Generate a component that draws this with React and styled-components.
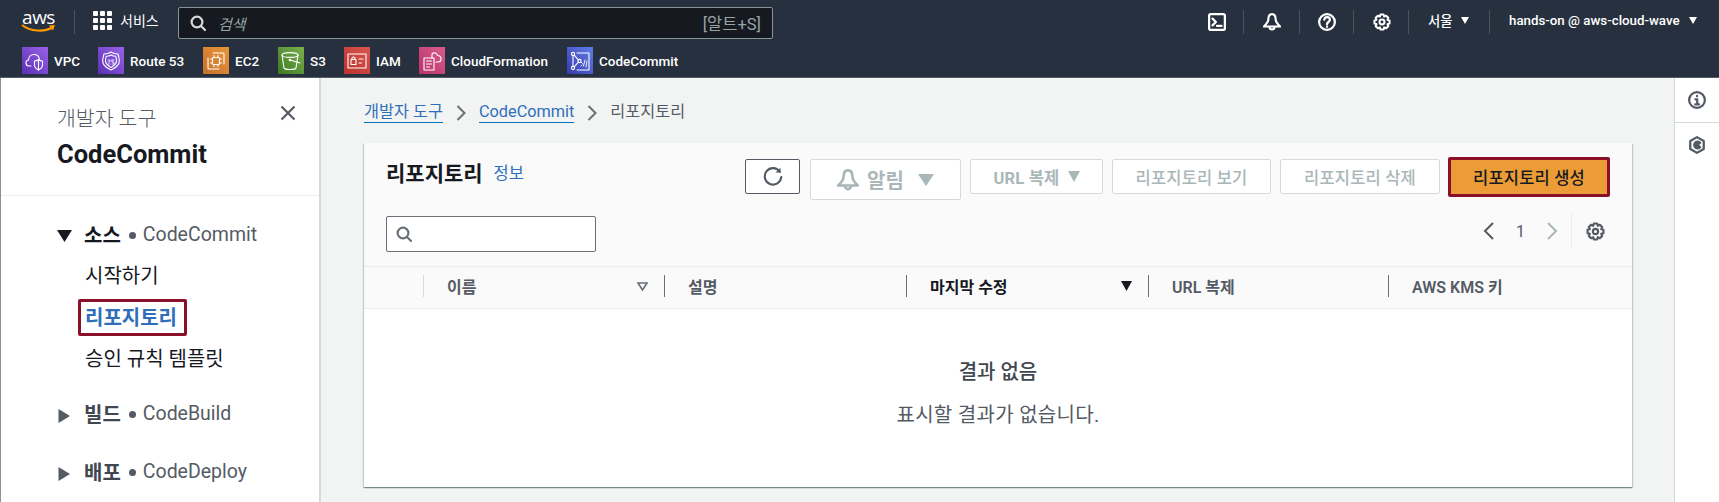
import React from 'react';
import styled, {createGlobalStyle} from 'styled-components';

const Global = createGlobalStyle`
    html, body {
        margin: 0;
        padding: 0;
        background: #f2f3f3;
        overflow: hidden;
    }
    * { box-sizing: border-box; }
    body {
        font-family: Roboto, "Noto Sans CJK KR", sans-serif;
        color: #16191f;
    }
`

const Page = styled.div`
    width: 1719px;
    height: 502px;
    display: flex;
    flex-direction: column;
    overflow: hidden;
`
const TopBar = styled.header`
    height: 78px;
    flex: none;
    background: #27303e;
    border-bottom: 1px solid #545b64;
    display: flex;
    flex-direction: column;
`
const TopRow = styled.div`
    height: 47px;
    display: flex;
    align-items: flex-start;
    padding: 7px 0 0 21px;
`
const Logo = styled.div`
    width: 35px;
    height: 24px;
    margin-top: 3px;
    display: flex;
    flex-direction: column;
    align-items: center;
    color: #fff;
    font-size: 19px;
    line-height: 15px;
    font-family: "Open Sans", sans-serif;
    letter-spacing: -0.5px;
`
const Smile = styled.svg`
    display: block;
    margin-top: -1px;
`
const TopDivider = styled.span`
    flex: none;
    width: 1px;
    height: 24px;
    margin: ${p => p.$m || '3px 0 0 0'};
    background: #4a535f;
`
const ServicesBtn = styled.div`
    display: flex;
    align-items: center;
    gap: 8px;
    height: 26px;
    margin: 0 0 0 18px;
    color: #fff;
    font-size: 14px;
    width: 85px;
`
const GridIcon = styled.div`
    display: grid;
    grid-template-columns: repeat(3, 5px);
    grid-auto-rows: 5px;
    gap: 2px;
    & > i {
        background: #fff;
        border-radius: 1px;
    }
`
const SearchBox = styled.div`
    width: 595px;
    height: 32px;
    background: #16191f;
    border: 1px solid #879596;
    border-radius: 2px;
    display: flex;
    align-items: center;
    padding: 0 11px 0 11px;
    color: #95a5a6;
`
const SearchGlass = styled.span`
    display: flex;
    color: #d5dbdb;
`
const SearchHint = styled.span`
    margin-left: 12px;
    font-style: italic;
    font-size: 15px;
    flex: 1;
`
const SearchKey = styled.span`
    font-size: 16.5px;
`
const RightTools = styled.div`
    display: flex;
    align-items: flex-start;
    margin-left: auto;
    color: #fff;
`
const ToolIcon = styled.span`
    flex: none;
    width: 18px;
    height: 18px;
    margin: ${p => p.$m};
    display: flex;
`
const MenuText = styled.span`
    display: flex;
    align-items: center;
    height: 26px;
    font-size: 13.3px;
    font-weight: 500;
    margin: ${p => p.$m};
    width: ${p => p.$w}px;
    white-space: nowrap;
    justify-content: space-between;
`
const Caret = styled.span`
    width: 0;
    height: 0;
    border-left: 4px solid transparent;
    border-right: 4px solid transparent;
    border-top: 7px solid #fff;
`
const Bookmarks = styled.nav`
    display: flex;
    align-items: center;
    padding-left: 22px;
    height: 27px;
`
const Bookmark = styled.span`
    display: flex;
    align-items: center;
    gap: 6px;
    color: #fff;
    font-size: 13.5px;
    font-weight: 500;
    width: ${p => p.$w}px;
    white-space: nowrap;
`
const Tile = styled.span`
    flex: none;
    width: 26px;
    height: 27px;
    display: flex;
    align-items: center;
    justify-content: center;
    background: linear-gradient(45deg, ${p => p.$from}, ${p => p.$to});
`
const Body = styled.div`
    flex: 1;
    display: flex;
    min-height: 0;
`
const Sidebar = styled.aside`
    width: 321px;
    flex: none;
    background: #fff;
    border-left: 1px solid #879596;
    border-right: 2px solid #d5dbdb;
`
const SideHead = styled.div`
    position: relative;
    padding: 29px 0 26px 56px;
    border-bottom: 1px solid #eaeded;
`
const SideCrumb = styled.div`
    font-size: 20.5px;
    line-height: 24px;
    color: #545b64;
    font-weight: 300;
`
const SideTitle = styled.div`
    margin-top: 8px;
    font-size: 25.5px;
    line-height: 30px;
    font-weight: 700;
`
const CloseBtn = styled.svg`
    position: absolute;
    right: 23px;
    top: 27px;
`
const SideNav = styled.div`
    padding: 26px 0 0 56px;
`
const SideGroup = styled.div`
    display: flex;
    align-items: center;
    height: 24px;
    margin-top: ${p => p.$mt || 0}px;
`
const Triangle = styled.span`
    flex: none;
    width: 27px;
    display: flex;
    align-items: center;
    padding-top: ${p => p.$pt || 0}px;
`
const GroupName = styled.strong`
    font-size: 20px;
    font-weight: 700;
    color: ${p => (p.$open ? '#16191f' : '#414750')};
`
const Dot = styled.span`
    width: 7px;
    height: 7px;
    border-radius: 50%;
    background: #545b64;
    margin: 3px 7px 0 8px;
`
const GroupService = styled.span`
    font-size: 19.5px;
    color: #545b64;
`
const SideItem = styled.div`
    font-size: 20px;
    line-height: 24px;
    margin: ${p => p.$mt || 0}px 0 0 28px;
    color: #16191f;
`
const ActiveItem = styled.div`
    width: 109px;
    height: 37px;
    margin: 11px 0 11px 21px;
    border: 3px solid #8a0f2a;
    border-radius: 2px;
    color: #2f6fba;
    font-size: 20px;
    font-weight: 700;
    line-height: 32px;
    padding-left: 4px;
    white-space: nowrap;
`
const Main = styled.main`
    flex: 1;
    padding: 0 42px 0 43px;
    min-width: 0;
`
const Crumbs = styled.div`
    height: 65px;
    display: flex;
    align-items: flex-start;
    padding-top: 23px;
    font-size: 16.3px;
    line-height: 22px;
    color: #545b64;
`
const CrumbLink = styled.span`
    color: #2f6fba;
    border-bottom: 1px solid #0073bb;
    height: 22px;
`
const CrumbSep = styled.svg`
    margin: 4px 13px 0 13px;
`
const Card = styled.section`
    height: 344px;
    background: #fff;
    box-shadow: 0 1px 1px 0 rgba(0, 28, 36, 0.3), 1px 1px 1px 0 rgba(0, 28, 36, 0.15), -1px 1px 1px 0 rgba(0, 28, 36, 0.15);
    display: flex;
    flex-direction: column;
`
const CardHead = styled.div`
    background: #fafafa;
    padding: 16px 22px 14px 22px;
`
const HeadRow = styled.div`
    display: flex;
    align-items: flex-start;
    height: ${p => p.$h}px;
    margin-bottom: ${p => p.$mb || 0}px;
`
const CardTitle = styled.h1`
    margin: 1px 0 0;
    font-size: 21px;
    line-height: 28px;
    font-weight: 700;
`
const InfoLink = styled.a`
    margin: 1px 0 0 11px;
    color: #2f6fba;
    font-size: 16.5px;
    line-height: 28px;
`
const Toolbar = styled.div`
    margin-left: auto;
    display: flex;
    align-items: flex-start;
    gap: 9px;
`
const Button = styled.button`
    width: ${p => p.$w}px;
    height: ${p => p.$h || 35}px;
    background: #fff;
    border: 1px solid #d5dbdb;
    border-radius: 2px;
    color: #aab7b8;
    font-family: inherit;
    font-size: ${p => p.$size || 16.5}px;
    font-weight: ${p => p.$weight || 500};
    display: flex;
    align-items: center;
    justify-content: center;
    gap: ${p => p.$gap || 0}px;
    padding: 0;
    white-space: nowrap;
    letter-spacing: 0.2px;
`
const RefreshButton = styled(Button)`
    border-color: #545b64;
    color: #545b64;
    margin-right: 1px;
`
const CreateButton = styled(Button)`
    height: 40px;
    margin: -2px 0 0 -1px;
    border: 3px solid #8a0f2a;
    background: #ec9c37;
    color: #16191f;
`
const TableSearch = styled.div`
    width: 210px;
    height: 36px;
    background: #fff;
    border: 1px solid #687078;
    border-radius: 2px;
    display: flex;
    align-items: center;
    padding-left: 9px;
    color: #687078;
`
const Pager = styled.div`
    margin-left: auto;
    display: flex;
    align-items: center;
    height: 36px;
    margin-top: -3px;
    padding-right: 5px;
    color: #545b64;
`
const PagerNum = styled.span`
    margin: 0 21px;
    font-size: 16px;
`
const PagerDivider = styled.span`
    width: 1px;
    height: 36px;
    background: #eaeded;
    margin: 0 14px 0 13px;
`
const TableHead = styled.div`
    background: #fafafa;
    height: 43px;
    flex: none;
    display: grid;
    grid-template-columns: 59px 241px 242px 242px 240px 1fr;
    border-top: 1px solid #eaeded;
    border-bottom: 1px solid #eaeded;
    align-items: center;
    padding-bottom: 3px;
`
const HeadCell = styled.div`
    height: 22px;
    display: flex;
    align-items: center;
    justify-content: space-between;
    padding: 0 16px 0 23px;
    font-size: 16px;
    font-weight: ${p => (p.$active ? 700 : 600)};
    color: ${p => (p.$active ? '#16191f' : '#545b64')};
    border-left: 1px solid ${p => (p.$soft ? '#d5dbdb' : '#687078')};
`
const Empty = styled.div`
    flex: 1;
    display: flex;
    flex-direction: column;
    align-items: center;
    padding-top: 50px;
`
const EmptyTitle = styled.div`
    font-size: 20px;
    line-height: 26px;
    font-weight: 500;
    color: #414750;
`
const EmptyText = styled.div`
    margin-top: 17px;
    font-size: 20px;
    line-height: 26px;
    color: #545b64;
    letter-spacing: 0.3px;
`
const Rail = styled.aside`
    width: 45px;
    flex: none;
    background: #fff;
    border-left: 1px solid #d5dbdb;
    color: #545b64;
`
const RailBtn = styled.div`
    height: ${p => p.$h}px;
    display: flex;
    justify-content: center;
    padding-top: ${p => p.$pt}px;
    border-bottom: ${p => (p.$line ? '1px solid #d5dbdb' : 'none')};
`
const AfterAlert = styled.svg`
    margin-left: 6px;
`

const Line = ({children, size = 18, width = 2, viewBox = '0 0 16 16'}) => (
    <svg width={size} height={size} viewBox={viewBox} fill="none" stroke="currentColor" strokeWidth={width} strokeLinecap="round" strokeLinejoin="round">
        {children}
    </svg>
)
const BellIcon = ({size, width = 1.9}) => (
    <Line size={size} width={width}>
        <path d="M8 1 C5.8 1 4.8 3 4.8 5.4 C4.8 8 3 10 0.8 12 H15.2 C13 10 11.2 8 11.2 5.4 C11.2 3 10.2 1 8 1Z" />
        <path d="M5.8 12.4 A2.2 2.2 0 0 0 10.2 12.4" />
    </Line>
)
const GearIcon = ({size = 18}) => (
    <Line size={size} width={1.8}>
        <circle cx="8" cy="8" r="2.2" />
        <path d="M6.6 1.3 H9.4 L9.9 3.2 L11.7 2.4 L13.6 4.3 L12.8 6.1 L14.7 6.6 V9.4 L12.8 9.9 L13.6 11.7 L11.7 13.6 L9.9 12.8 L9.4 14.7 H6.6 L6.1 12.8 L4.3 13.6 L2.4 11.7 L3.2 9.9 L1.3 9.4 V6.6 L3.2 6.1 L2.4 4.3 L4.3 2.4 L6.1 3.2 Z" />
    </Line>
)
const MagnifierIcon = ({size = 16, width = 2.2}) => (
    <Line size={size} width={width}>
        <circle cx="7" cy="7" r="5.4" />
        <path d="M11 11 L15 15" />
    </Line>
)
const Chevron = ({dir = 'right', color = '#545b64'}) => (
    <svg width="12" height="20" viewBox="0 0 12 20" fill="none" stroke={color} strokeWidth="2">
        <path d={dir === 'right' ? 'M2 2 L10 10 L2 18' : 'M10 2 L2 10 L10 18'} />
    </svg>
)
const Arrow = ({open, color}) => (
    <svg width="15" height="14" viewBox="0 0 15 14" fill={color}>
        <path d={open ? 'M0 1 H15 L7.5 13 Z' : 'M1.5 0 L13 7 L1.5 14 Z'} />
    </svg>
)
const CrumbChevron = () => (
    <CrumbSep width="10" height="16" viewBox="0 0 10 16" fill="none" stroke="#687078" strokeWidth="2">
        <path d="M1.5 1 L8.5 8 L1.5 15" />
    </CrumbSep>
)

const tileIcon = {fill: 'none', stroke: '#fff', strokeWidth: 1.1, strokeLinejoin: 'round', strokeLinecap: 'round'}
const TileIcon = ({children}) => (
    <svg width="22" height="22" viewBox="0 0 22 22" {...tileIcon}>{children}</svg>
)

const services = [
    {name: 'VPC', w: 76, from: '#5a2fb5', to: '#9a63e8', icon: (
        <>
            <path d="M7 16 H5 C3 16 2 14.6 2 13 C2 11.4 3 10 4.6 10 C4.6 7 6.6 4.5 10 4.5 C13 4.5 15 6.5 15.4 9" />
            <path d="M10.5 11 C12 11 13.5 10.5 14.5 9.5 C15.5 10.5 17 11 18.5 11 V15 C18.5 17.5 16.5 19 14.5 20 C12.5 19 10.5 17.5 10.5 15 Z" />
            <path d="M14.5 10 V20" />
        </>
    )},
    {name: 'Route 53', w: 105, from: '#5a2fb5', to: '#9a63e8', icon: (
        <>
            <path d="M11 2 C13 3.5 15.5 4 18 4 C19 8 20 10 19 13 C18 16.5 14 18.5 11 20 C8 18.5 4 16.5 3 13 C2 10 3 8 4 4 C6.5 4 9 3.5 11 2Z" />
            <path d="M11 5 C12.5 6 14 6.3 15.8 6.3 C16.5 9 17 10.5 16.3 12.5 C15.5 15 13 16.3 11 17.5 C9 16.3 6.5 15 5.7 12.5 C5 10.5 5.5 9 6.2 6.3 C8 6.3 9.5 6 11 5Z" />
            <path d="M8 10 H10 V12 H8 M10 14 H8 M12 10 H14 M12 10 V12 H14 V14 H12" strokeWidth=".8" />
        </>
    )},
    {name: 'EC2', w: 75, from: '#c8712b', to: '#e8963b', icon: (
        <>
            <rect x="7.5" y="7.5" width="7" height="7" rx="1" />
            <path d="M9 5.5 V7.5 M13 5.5 V7.5 M9 14.5 V16.5 M13 14.5 V16.5 M5.5 9 H7.5 M5.5 13 H7.5 M14.5 9 H16.5 M14.5 13 H16.5" />
            <path d="M8 3 H18 C18.6 3 19 3.4 19 4 V14" />
            <path d="M3 8 V18 C3 18.6 3.4 19 4 19 H14" />
        </>
    )},
    {name: 'S3', w: 66, from: '#3c7a22', to: '#7cb04e', icon: (
        <>
            <ellipse cx="10" cy="5" rx="8" ry="2.4" />
            <path d="M2 5 L4 18 C4.5 20 15.5 20 16 18 L18 5" />
            <path d="M10 10 L20 13" />
            <circle cx="10" cy="10" r=".8" />
        </>
    )},
    {name: 'IAM', w: 75, from: '#b8322e', to: '#dc5650', icon: (
        <>
            <rect x="2" y="4" width="18" height="14" />
            <rect x="5" y="9.5" width="5" height="5" />
            <path d="M6 9.5 V8 C6 6.6 9 6.6 9 8 V9.5" />
            <path d="M13 9 H17 M13 13 H15.5" />
        </>
    )},
    {name: 'CloudFormation', w: 148, from: '#b8336a', to: '#d95c8c', icon: (
        <>
            <path d="M11 8 V4 C13 2 16 3 16.5 5.5 C18.5 5.5 20 7 20 9 C20 11 18.5 12 17 12 H15" />
            <rect x="3" y="8" width="10" height="12" />
            <path d="M5.5 11 H10.5 M5.5 14 H10.5 M5.5 17 H8.5" />
        </>
    )},
    {name: 'CodeCommit', w: 110, from: '#3a3aad', to: '#5f7fe8', icon: (
        <>
            <circle cx="4" cy="4" r="1.6" />
            <circle cx="4" cy="18" r="1.6" />
            <circle cx="10.5" cy="11" r="1.6" />
            <path d="M4 5.6 V16.4 M5.2 5.2 L9.4 9.9 M5.2 16.8 L9.4 12.1 M8 3 H20 V20 H8" />
            <path d="M13.5 13.5 L12 12 M13 15 L12 16 M16 10 L14.5 16 M18 11 L17 17" strokeWidth=".9" />
        </>
    )},
]

const columns = [
    {name: '이름', sort: 'outline', soft: true},
    {name: '설명'},
    {name: '마지막 수정', active: true, sort: 'solid'},
    {name: 'URL 복제'},
    {name: 'AWS KMS 키'},
]

function Header() {
    return (
        <TopBar>
            <TopRow>
                <Logo>
                    aws
                    <Smile width="35" height="9" viewBox="0 0 35 9" fill="none">
                        <path d="M1 1 C9 7.5 24 8.5 32 3" stroke="#f90" strokeWidth="2.2" />
                        <path d="M28 1.5 L34 1 L32 6.5" fill="#f90" />
                    </Smile>
                </Logo>
                <TopDivider $m="3px 0 0 18px" />
                <ServicesBtn>
                    <GridIcon>{Array.from({length: 9}).map((_, i) => <i key={i} />)}</GridIcon>
                    서비스
                </ServicesBtn>
                <SearchBox>
                    <SearchGlass><MagnifierIcon /></SearchGlass>
                    <SearchHint>검색</SearchHint>
                    <SearchKey>[알트+S]</SearchKey>
                </SearchBox>
                <RightTools>
                    <ToolIcon $m="6px 17px 0 0">
                        <Line>
                            <rect x="1" y="1" width="14" height="14" rx="1.5" />
                            <path d="M4 5 L7 8 L4 11 M8 11.5 H12" />
                        </Line>
                    </ToolIcon>
                    <TopDivider />
                    <ToolIcon $m="6px 18px 0 19px"><BellIcon /></ToolIcon>
                    <TopDivider />
                    <ToolIcon $m="6px 17px 0 18px">
                        <Line>
                            <circle cx="8" cy="8" r="7" />
                            <path d="M5.6 6 C5.8 2.8 10.6 3 10.6 6 C10.6 8 8 8 8 10" />
                            <path d="M8 12.2 V12.3" />
                        </Line>
                    </ToolIcon>
                    <TopDivider />
                    <ToolIcon $m="6px 17px 0 19px"><GearIcon /></ToolIcon>
                    <TopDivider />
                    <MenuText $m="0 20px 0 19px" $w={41}>서울 <Caret /></MenuText>
                    <TopDivider />
                    <MenuText $m="0 22px 0 19px" $w={188}>hands-on @ aws-cloud-wave <Caret /></MenuText>
                </RightTools>
            </TopRow>
            <Bookmarks>
                {services.map(s => (
                    <Bookmark key={s.name} $w={s.w}>
                        <Tile $from={s.from} $to={s.to}><TileIcon>{s.icon}</TileIcon></Tile>
                        {s.name}
                    </Bookmark>
                ))}
            </Bookmarks>
        </TopBar>
    )
}

function SideMenu() {
    return (
        <Sidebar>
            <SideHead>
                <SideCrumb>개발자 도구</SideCrumb>
                <SideTitle>CodeCommit</SideTitle>
                <CloseBtn width="16" height="16" viewBox="0 0 16 16" stroke="#545b64" strokeWidth="2.2">
                    <path d="M1.5 1.5 L14.5 14.5 M14.5 1.5 L1.5 14.5" />
                </CloseBtn>
            </SideHead>
            <SideNav>
                <SideGroup>
                    <Triangle $pt={4}><Arrow open color="#16191f" /></Triangle>
                    <GroupName $open>소스</GroupName>
                    <Dot />
                    <GroupService>CodeCommit</GroupService>
                </SideGroup>
                <SideItem $mt={18}>시작하기</SideItem>
                <ActiveItem>리포지토리</ActiveItem>
                <SideItem>승인 규칙 템플릿</SideItem>
                <SideGroup $mt={30}>
                    <Triangle $pt={6}><Arrow color="#545b64" /></Triangle>
                    <GroupName>빌드</GroupName>
                    <Dot />
                    <GroupService>CodeBuild</GroupService>
                </SideGroup>
                <SideGroup $mt={34}>
                    <Triangle $pt={6}><Arrow color="#545b64" /></Triangle>
                    <GroupName>배포</GroupName>
                    <Dot />
                    <GroupService>CodeDeploy</GroupService>
                </SideGroup>
            </SideNav>
        </Sidebar>
    )
}

function RepoCard() {
    return (
        <Card>
            <CardHead>
                <HeadRow $h={41} $mb={16}>
                    <CardTitle>리포지토리</CardTitle>
                    <InfoLink>정보</InfoLink>
                    <Toolbar>
                        <RefreshButton $w={55}>
                            <Line size={20} width={1.7}>
                                <path d="M13.5 3.8 A6.6 6.6 0 1 0 14.6 8" />
                                <path d="M10 4.4 H14 V0.6" fill="currentColor" stroke="none" />
                            </Line>
                        </RefreshButton>
                        <Button $w={151} $h={41} $size={20} $weight={700} $gap={8}>
                            <BellIcon size={22} width={1.9} />
                            알림
                            <AfterAlert width="16" height="12" viewBox="0 0 16 12" fill="#aab7b8"><path d="M0 0 H16 L8 12Z" /></AfterAlert>
                        </Button>
                        <Button $w={133} $weight={700} $gap={8}>
                            URL 복제
                            <svg width="12" height="11" viewBox="0 0 12 11" fill="#aab7b8"><path d="M0 0 H12 L6 11Z" /></svg>
                        </Button>
                        <Button $w={159}>리포지토리 보기</Button>
                        <Button $w={160}>리포지토리 삭제</Button>
                        <CreateButton $w={162}>리포지토리 생성</CreateButton>
                    </Toolbar>
                </HeadRow>
                <HeadRow $h={36}>
                    <TableSearch><MagnifierIcon /></TableSearch>
                    <Pager>
                        <Chevron dir="left" />
                        <PagerNum>1</PagerNum>
                        <Chevron color="#aab7b8" />
                        <PagerDivider />
                        <GearIcon size={19} />
                    </Pager>
                </HeadRow>
            </CardHead>
            <TableHead>
                <div />
                {columns.map(c => (
                    <HeadCell key={c.name} $active={c.active} $soft={c.soft}>
                        {c.name}
                        {c.sort === 'outline' && (
                            <svg width="11" height="9" viewBox="0 0 11 9" fill="none" stroke="#687078" strokeWidth="1.6"><path d="M1 1 H10 L5.5 8Z" /></svg>
                        )}
                        {c.sort === 'solid' && (
                            <svg width="11" height="10" viewBox="0 0 11 10" fill="#16191f"><path d="M0 0 H11 L5.5 10Z" /></svg>
                        )}
                    </HeadCell>
                ))}
            </TableHead>
            <Empty>
                <EmptyTitle>결과 없음</EmptyTitle>
                <EmptyText>표시할 결과가 없습니다.</EmptyText>
            </Empty>
        </Card>
    )
}

export default function App() {
    return (
        <Page>
            <Global />
            <Header />
            <Body>
                <SideMenu />
                <Main>
                    <Crumbs>
                        <CrumbLink>개발자 도구</CrumbLink>
                        <CrumbChevron />
                        <CrumbLink>CodeCommit</CrumbLink>
                        <CrumbChevron />
                        리포지토리
                    </Crumbs>
                    <RepoCard />
                </Main>
                <Rail>
                    <RailBtn $h={45} $pt={13} $line>
                        <Line>
                            <circle cx="8" cy="8" r="7" />
                            <path d="M8 4.4 V4.6 M6.6 7.4 H8.2 V11.6 M6.4 11.8 H9.8" />
                        </Line>
                    </RailBtn>
                    <RailBtn $h={45} $pt={13}>
                        <Line>
                            <path d="M8 1 L14 4.5 V11.5 L8 15 L2 11.5 V4.5 Z" />
                            <path d="M10.8 6 A3 3 0 1 0 10.8 10 L8 8 Z" fill="currentColor" />
                        </Line>
                    </RailBtn>
                </Rail>
            </Body>
        </Page>
    )
}
